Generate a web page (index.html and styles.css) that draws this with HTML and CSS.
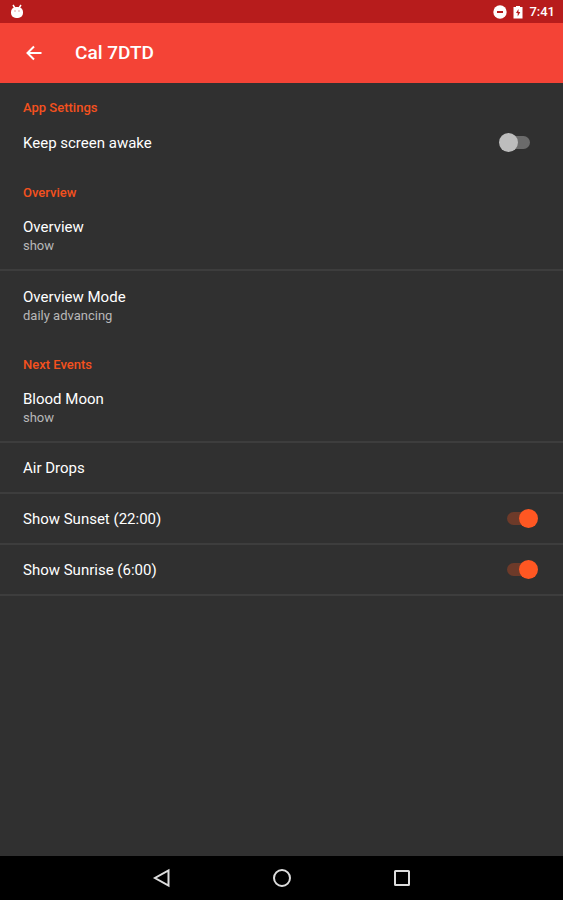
FILE: index.html
```
<!DOCTYPE html>
<html lang="en">

<head>
    <meta charset="UTF-8">
    <meta name="viewport" content="width=device-width, initial-scale=1.0">
    <title>Cal 7DTD</title>
    <link rel="stylesheet" href="styles.css">
</head>

<body>
    <div class="status-bar">
        <svg class="debug-icon" width="14" height="16" viewBox="0 0 14 16" aria-hidden="true">
            <path d="M3 1l2 3M11 1L9 4" stroke="#fff" stroke-width="1.5" />
            <rect x="1" y="3" width="12" height="11" rx="5" fill="#fff" />
            <path d="M4 7h2M8 7h2" stroke="#e3a3a3" />
        </svg>
        <div class="status-right">
            <svg width="14" height="14" viewBox="0 0 14 14" aria-hidden="true">
                <circle cx="7" cy="7" r="6.700" fill="#fff" />
                <path d="M4 7h6" stroke="#b71c1c" stroke-width="2" />
            </svg>
            <svg width="10" height="14" viewBox="0 0 10 14" aria-hidden="true">
                <path d="M3 1h4v1h2.500v11.500h-9V2H3z" fill="#fff" />
                <path d="M5.500 4L3 8h1.700v3.500L7.300 7H5.500z" fill="#b71c1c" />
            </svg>
            <span class="clock">7:41</span>
        </div>
    </div>

    <header class="app-bar">
        <button type="button" class="back" aria-label="Back">
            <svg width="16" height="16" viewBox="0 0 16 16">
                <path d="M15.500 8H2M8 1.500L1.500 8L8 14.500" fill="none" stroke="#fff" stroke-width="2" />
            </svg>
        </button>
        <h1>Cal 7DTD</h1>
    </header>

    <main>
        <section>
            <h2>App Settings</h2>
            <label class="row">
                <span class="name">Keep screen awake</span>
                <input type="checkbox" class="switch" id="awake">
            </label>
        </section>

        <section>
            <h2>Overview</h2>
            <button type="button" class="row tall line">
                <span class="name">Overview</span>
                <span class="value">show</span>
            </button>
            <button type="button" class="row tall">
                <span class="name">Overview Mode</span>
                <span class="value">daily advancing</span>
            </button>
        </section>

        <section>
            <h2>Next Events</h2>
            <button type="button" class="row tall line">
                <span class="name">Blood Moon</span>
                <span class="value">show</span>
            </button>
            <button type="button" class="row line">
                <span class="name">Air Drops</span>
            </button>
            <label class="row line">
                <span class="name">Show Sunset (22:00)</span>
                <input type="checkbox" class="switch" id="sunset" checked>
            </label>
            <label class="row line">
                <span class="name">Show Sunrise (6:00)</span>
                <input type="checkbox" class="switch" id="sunrise" checked>
            </label>
        </section>
    </main>

    <nav class="nav-bar">
        <button type="button" aria-label="Back">
            <svg width="20" height="20" viewBox="0 0 20 20">
                <path d="M16.500 2.500v15L3 10z" />
            </svg>
        </button>
        <button type="button" aria-label="Home">
            <svg width="20" height="20" viewBox="0 0 20 20">
                <circle cx="10" cy="10" r="8" />
            </svg>
        </button>
        <button type="button" aria-label="Recent apps">
            <svg width="20" height="20" viewBox="0 0 20 20">
                <rect x="3" y="3" width="14" height="14" rx="0.500" />
            </svg>
        </button>
    </nav>
</body>

</html>
```

FILE: styles.css
```
/* General Styles */
* {
    box-sizing: border-box;
}

body {
    display: flex;
    flex-direction: column;
    min-height: 100vh;
    margin: 0;
    font-family: Roboto, "Liberation Sans", sans-serif;
    background-color: #303030;
    color: #fff;
}

button {
    padding: 0;
    border: none;
    background: none;
    color: inherit;
    font-family: inherit;
    cursor: pointer;
}

svg {
    display: block;
}

/* Status Bar */
.status-bar {
    display: flex;
    align-items: center;
    justify-content: space-between;
    height: 23px;
    padding: 0 8px 0 10px;
    background-color: #b71c1c;
}

.status-right {
    display: flex;
    align-items: center;
    gap: 6px;
}

.clock {
    font-size: 13px;
    font-weight: 500;
    line-height: 16px;
}

/* App Bar */
.app-bar {
    display: flex;
    align-items: center;
    gap: 33px;
    height: 60px;
    padding: 0 26px;
    background-color: #f44336;
}

h1 {
    margin: 0;
    font-size: 19px;
    font-weight: 500;
    line-height: 24px;
}

/* Settings List */
main {
    flex: 1;
}

h2 {
    margin: 0;
    padding: 17px 23px 1px;
    font-size: 13px;
    font-weight: 500;
    line-height: 16px;
    color: #f4511e;
}

.row {
    display: flex;
    align-items: center;
    justify-content: space-between;
    width: 100%;
    min-height: 51px;
    padding: 0 25px 0 23px;
    text-align: left;
    cursor: pointer;
}

.row.tall {
    flex-direction: column;
    align-items: flex-start;
    justify-content: center;
    min-height: 69px;
}

.line {
    border-bottom: 2px solid #3d3d3d;
}

.name {
    font-size: 15px;
    line-height: 20px;
}

.value {
    font-size: 13px;
    line-height: 18px;
    color: #b8b8b8;
}

/* Switches */
.switch {
    display: grid;
    align-items: center;
    width: 39px;
    height: 19px;
    margin: 0;
    appearance: none;
    cursor: pointer;
}

.switch::before,
.switch::after {
    content: "";
    grid-area: 1 / 1;
}

.switch::before {
    justify-self: center;
    width: 23px;
    height: 13px;
    border-radius: 7px;
    background-color: #6b6b6b;
}

.switch::after {
    width: 19px;
    height: 19px;
    border-radius: 50%;
    background-color: #bdbdbd;
}

.switch:checked::before {
    background-color: #6d3a29;
}

.switch:checked::after {
    justify-self: end;
    background-color: #ff5722;
}

/* Navigation Bar */
.nav-bar {
    display: flex;
    align-items: center;
    justify-content: center;
    gap: 100px;
    height: 44px;
    background-color: #000;
}

.nav-bar svg {
    fill: none;
    stroke: #ddd;
    stroke-width: 2;
}
```
